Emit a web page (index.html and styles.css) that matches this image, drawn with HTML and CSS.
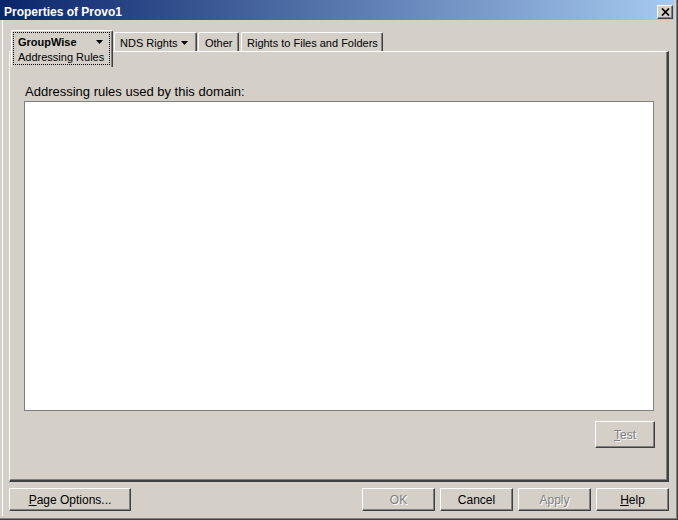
FILE: index.html
```html
<html>
<head>
  <link rel="stylesheet" href="styles.css">
</head>
<body>

<div class="window">
  <div class="titlebar">
    <span class="title">Properties of Provo1</span>
    <button class="close_btn">
      <svg width="9" height="8" viewBox="0 0 9 8"><path d="M1 0.5 L8 7.5 M8 0.5 L1 7.5" stroke="#000" stroke-width="1.7" fill="none"/></svg>
    </button>
  </div>
  <div class="content">
    <div class="tabs">
      <div class="tab tab_selected">
        <div class="focus">
          <div class="tab_row">
            <b>GroupWise</b>
            <svg class="arrow" width="7" height="4" viewBox="0 0 7 4"><polygon points="0,0 7,0 3.5,4" fill="#000"/></svg>
          </div>
          <div class="subtab">Addressing Rules</div>
        </div>
      </div>
      <div class="tab tab_nds">
        <span>NDS Rights</span>
        <svg class="arrow" width="7" height="4" viewBox="0 0 7 4"><polygon points="0,0 7,0 3.5,4" fill="#000"/></svg>
      </div>
      <div class="tab tab_other">Other</div>
      <div class="tab tab_rights">Rights to Files and Folders</div>
    </div>
    <div class="panel">
      <div class="label">Addressing rules used by this domain:</div>
      <div class="listbox"></div>
      <div class="panel_buttons">
        <button class="btn btn_test" disabled><u>T</u>est</button>
      </div>
    </div>
    <div class="buttons">
      <button class="btn btn_page"><u>P</u>age Options...</button>
      <div class="spacer"></div>
      <button class="btn" disabled>OK</button>
      <button class="btn">Cancel</button>
      <button class="btn" disabled>Apply</button>
      <button class="btn"><u>H</u>elp</button>
    </div>
  </div>
</div>

</body>
</html>
```

FILE: styles.css
```css
body{
  margin: 0;
  background: #d4d0c8;
  font-family: "Liberation Sans", Arial, sans-serif;
  font-size: 12px;
  color: #000;
}
.window{
  width: 678px;
  height: 520px;
  box-sizing: border-box;
  display: flex;
  flex-direction: column;
  padding: 0 3px 3px 0;
  border-right: 1px solid #404040;
  border-bottom: 1px solid #404040;
  box-shadow: inset -1px -1px #808080;
}
.titlebar{
  height: 20px;
  box-sizing: border-box;
  padding: 4px 1px 0 4px;
  display: flex;
  align-items: center;
  justify-content: space-between;
  background: linear-gradient(to right, #0a246a, #a6caf0);
}
.title{
  color: #fff;
  font-weight: bold;
  font-size: 12px;
  line-height: 14px;
}
.close_btn{
  width: 16px;
  height: 14px;
  padding: 0;
  box-sizing: border-box;
  display: flex;
  align-items: center;
  justify-content: center;
  background: #d4d0c8;
  border: 1px solid;
  border-color: #fff #404040 #404040 #fff;
  box-shadow: inset -1px -1px #808080;
}
.content{
  flex: 1;
  display: flex;
  flex-direction: column;
  margin-left: 2px;
  border-left: 1px solid #fff;
  padding: 10px 5px 5px 6px;
}

/* tabs */
.tabs{
  display: flex;
  align-items: flex-end;
  height: 21px;
  padding-left: 2px;
  font-size: 11px;
}
.tab{
  height: 19px;
  box-sizing: border-box;
  display: flex;
  align-items: center;
  padding: 1px 5px 0 5px;
  line-height: 14px;
  white-space: nowrap;
  border: 1px solid;
  border-bottom: none;
  border-color: #fff #404040 #fff #fff;
  box-shadow: inset -1px 0 #808080;
  border-radius: 2px 2px 0 0;
}
.tab_selected{
  position: relative;
  z-index: 1;
  width: 102px;
  height: 37px;
  margin-bottom: -16px;
  padding: 1px 2px 2px 1px;
  display: block;
  background: #d4d0c8;
}
.focus{
  border: 1px dotted #000;
  padding: 2px 6px 0 4px;
}
.tab_row{
  display: flex;
  align-items: center;
  justify-content: space-between;
  line-height: 14px;
}
.subtab{
  margin-top: 1px;
  line-height: 14px;
}
.tab_nds{
  width: 83px;
  margin-left: 1px;
  justify-content: space-between;
  padding-right: 8px;
}
.tab_other{
  width: 41px;
  margin-left: 1px;
  padding-left: 6px;
}
.tab_rights{
  width: 142px;
  margin-left: 2px;
}

/* panel */
.panel{
  height: 431px;
  box-sizing: border-box;
  display: flex;
  flex-direction: column;
  padding: 33px 13px 32px 14px;
  border: 1px solid;
  border-width: 1px 2px 2px 1px;
  border-color: #fff #404040 #404040 #fff;
  box-shadow: inset -1px -1px #808080;
}
.label{
  font-size: 13px;
  line-height: 14px;
  margin-bottom: 2px;
  padding-left: 1px;
}
.listbox{
  flex: 1;
  background: #fff;
  border: 1px solid #808080;
}
.panel_buttons{
  display: flex;
  justify-content: flex-end;
  margin-top: 10px;
  margin-right: -1px;
}

/* buttons */
.btn{
  height: 23px;
  width: 73px;
  padding: 0;
  box-sizing: border-box;
  background: #d4d0c8;
  font-family: "Liberation Sans", Arial, sans-serif;
  font-size: 12px;
  color: #000;
  border: 1px solid;
  border-color: #fff #404040 #404040 #fff;
  box-shadow: inset -1px -1px #808080;
}
.btn:disabled{
  color: #808080;
  text-shadow: 1px 1px #fff;
}
.btn_test{
  width: 60px;
  height: 27px;
}
.btn_page{
  width: 122px;
}
.buttons{
  display: flex;
  gap: 5px;
  margin-top: 6px;
}
.spacer{
  flex: 1;
}
```
